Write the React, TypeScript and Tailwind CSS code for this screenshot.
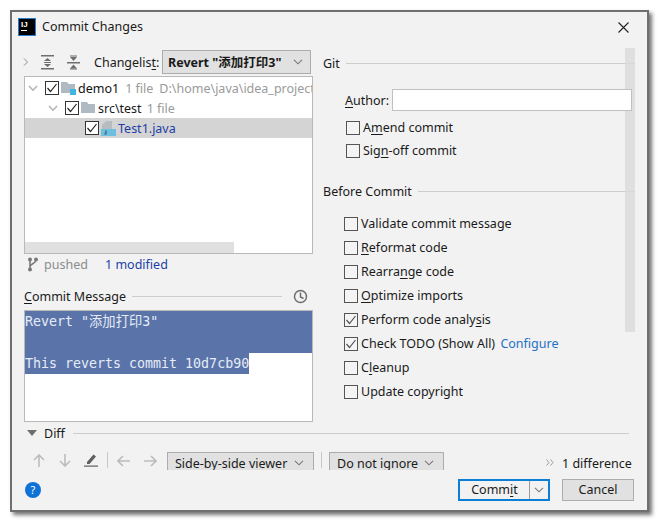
const Check = ({ checked = false, dark = false }: { checked?: boolean; dark?: boolean }) => (
  <span
    className={`flex h-[14px] w-[14px] shrink-0 items-center justify-center border ${
      dark ? "border-[#333333] bg-white" : "border-[#555555] bg-[#f4f4f4]"
    }`}
  >
    {checked && (
      <svg width="12" height="12" viewBox="0 0 12 12" fill="none" stroke={dark ? "#222222" : "#555555"} strokeWidth="1.2">
        <path d="M1.5 6 L4.5 9.5 L10.5 2" />
      </svg>
    )}
  </span>
);

const Chevron = ({ color = "#777777" }: { color?: string }) => (
  <svg width="10" height="6" viewBox="0 0 10 6" fill="none" stroke={color} strokeWidth="1.1">
    <path d="M1 0.8 L5 4.8 L9 0.8" />
  </svg>
);

const TreeChevron = () => (
  <svg width="10" height="7" viewBox="0 0 10 7" fill="none" stroke="#b4b4b4" strokeWidth="1.6" className="shrink-0">
    <path d="M1 1 L5 5.2 L9 1" />
  </svg>
);

const Folder = ({ badge = false }: { badge?: boolean }) => (
  <svg width="16" height="16" viewBox="0 0 16 16" className="shrink-0">
    <path d="M0 2 H6 L7.5 4 H14 V13 H0 Z" fill="#afbac3" />
    {badge && <rect x="9" y="9" width="6" height="6" fill="#40b6e0" />}
  </svg>
);

const Line = () => <div className="h-px flex-1 bg-[#cdcdcd]" />;

const OptionRow = ({ checked = false, rowClass = "h-[24px]", children }: { checked?: boolean; rowClass?: string; children: React.ReactNode }) => (
  <div className={`flex items-center gap-[3px] ${rowClass}`}>
    <Check checked={checked} />
    <span>{children}</span>
  </div>
);

const Combo = ({ label, width }: { label: string; width: string }) => (
  <div className={`flex h-[18px] items-start overflow-hidden border-x border-t border-[#adadad] bg-[#e1e1e1] pl-[7px] ${width}`}>
    <span className="whitespace-nowrap leading-[22px]">{label}</span>
    <span className="ml-auto mr-[9px] mt-[7px] shrink-0">
      <Chevron />
    </span>
  </div>
);

const App = () => {
  return (
    <div className="h-[523px] w-[660px] bg-white pl-[10px] pt-[10px] font-['Noto_Sans','Noto_Sans_CJK_SC',sans-serif] text-[12.5px] leading-[18px] text-[#1a1a1a]">
      <div className="flex h-[502px] w-[639px] flex-col border-2 border-[#6f6f6f] bg-[#f2f2f2] shadow-[3px_3px_4px_rgba(0,0,0,0.55)]">
        {/* Title bar */}
        <div className="flex h-[30px] shrink-0 items-center pl-[7px] pr-[18px]">
          <div className="flex h-[16px] w-[16px] flex-col bg-black px-[2px] pt-[1px] outline-1 outline-[#1f7fd4]">
            <span className="font-['Liberation_Sans'] text-[8px] font-bold leading-[9px] text-white">IJ</span>
            <span className="mt-px h-px w-[6px] bg-white" />
          </div>
          <span className="ml-[7px]">Commit Changes</span>
          <svg className="ml-auto" width="11" height="11" viewBox="0 0 11 11" stroke="#222222" strokeWidth="1.1">
            <path d="M0.5 0.5 L10.5 10.5 M10.5 0.5 L0.5 10.5" />
          </svg>
        </div>

        <div className="flex h-[380px] shrink-0">
          {/* Left column */}
          <div className="ml-[12px] flex w-[289px] shrink-0 flex-col pt-[8px]">
            <div className="flex h-[24px] items-center">
              <svg width="6" height="8" viewBox="0 0 6 8" fill="none" stroke="#8c8c8c" className="-ml-px">
                <path d="M1 0.5 L4.5 4 L1 7.5" />
              </svg>
              <svg width="14" height="15" viewBox="0 0 14 15" className="ml-[12px]" fill="#6e6e6e">
                <rect x="0" y="0" width="13" height="1.5" />
                <rect x="0" y="13" width="13" height="1.5" />
                <path d="M6.5 3 L10 6 H3 Z M6.5 12 L3 9 H10 Z" />
                <rect x="3" y="7" width="7" height="1" />
              </svg>
              <svg width="14" height="15" viewBox="0 0 14 15" className="ml-[12px]" fill="#6e6e6e">
                <rect x="0" y="7" width="13" height="1.5" />
                <path d="M6.5 6 L3 2 H10 Z M6.5 9.5 L10 13.5 H3 Z" />
                <rect x="3" y="0.5" width="7" height="1" />
                <rect x="3" y="13.5" width="7" height="1" />
              </svg>
              <span className="ml-[13px] w-[68px] shrink-0 pt-[2px]">
                Changelis<u className="underline-offset-2">t</u>:
              </span>
              <div className="flex h-[24px] w-[149px] shrink-0 items-center border border-[#adadad] bg-[#e1e1e1] pl-[5px] pr-[7px]">
                <span className="pt-[2px] font-bold">Revert "添加打印3"</span>
                <span className="ml-auto">
                  <Chevron />
                </span>
              </div>
            </div>

            {/* Changes tree */}
            <div className="mt-[2px] flex h-[178px] flex-col overflow-hidden border border-[#b9b9b9] bg-white pt-px">
              <div className="flex h-[20px] shrink-0 items-center whitespace-nowrap pl-[3px]">
                <TreeChevron />
                <span className="ml-[7px] shrink-0">
                  <Check checked dark />
                </span>
                <span className="ml-[2px] shrink-0">
                  <Folder badge />
                </span>
                <span className="ml-px shrink-0 pt-[2px] text-[#111111]">demo1</span>
                <span className="ml-[6px] shrink-0 pt-[2px] text-[#9a9a9a]">1 file</span>
                <span className="ml-[6px] shrink-0 pt-[2px] text-[#9a9a9a]">D:\home\java\idea_project</span>
              </div>
              <div className="flex h-[20px] shrink-0 items-center whitespace-nowrap pl-[23px]">
                <TreeChevron />
                <span className="ml-[7px] shrink-0">
                  <Check checked dark />
                </span>
                <span className="ml-[2px] shrink-0">
                  <Folder />
                </span>
                <span className="ml-px pt-[2px]">src\test</span>
                <span className="ml-[5px] pt-[2px] text-[#9a9a9a]">1 file</span>
              </div>
              <div className="flex h-[20px] shrink-0 items-center whitespace-nowrap bg-[#d4d4d4] pl-[60px]">
                <Check checked dark />
                <svg width="16" height="16" viewBox="0 0 16 16" className="ml-[2px] shrink-0">
                  <path d="M5 1 H11 V9 H1 V5 Z" fill="#b7bcc0" />
                  <rect x="0" y="9" width="15" height="7" fill="#6fbfe0" />
                  <path d="M5 10.5 V14 H3.5" stroke="#2a4a60" fill="none" />
                </svg>
                <span className="ml-px pt-[2px] text-[#1d3fa8]">Test1.java</span>
              </div>
              <div className="flex-1" />
              <div className="h-[11px] w-[209px] shrink-0 bg-[#e0e0e0]" />
            </div>

            <div className="flex h-[20px] items-center pl-[3px]">
              <svg width="12" height="15" viewBox="0 0 12 15" fill="none" stroke="#7a7a7a" strokeWidth="1.6">
                <circle cx="3" cy="2.5" r="1.2" fill="#7a7a7a" />
                <circle cx="9" cy="2.5" r="1.2" fill="#7a7a7a" />
                <circle cx="3" cy="12.5" r="1.2" fill="#7a7a7a" />
                <path d="M3 3 V12 M9 3 C9 7 3.5 6 3 10" />
              </svg>
              <span className="ml-[5px] w-[61px] pt-[2px] text-[#8c8c8c]">pushed</span>
              <span className="pt-[2px] text-[#1d3fa8]">1 modified</span>
            </div>

            <div className="mt-[9px] flex h-[27px] items-center gap-[6px]">
              <span>
                <u className="underline-offset-2">C</u>ommit Message
              </span>
              <Line />
              <svg width="15" height="15" viewBox="0 0 15 15" fill="none" stroke="#6e6e6e" strokeWidth="1.5" className="mx-[5px]">
                <circle cx="7.5" cy="7.5" r="6" />
                <path d="M7.5 3.5 V8 L10.5 9.5" />
              </svg>
            </div>

            <div className="h-[112px] border border-[#b9b9b9] bg-white font-['DejaVu_Sans_Mono','Noto_Sans_CJK_SC',monospace] text-[13.3px] leading-[21px] text-[#e6ecf7]">
              <div className="h-[21px] whitespace-pre bg-[#5a74aa]">Revert "添加打印3"</div>
              <div className="h-[21px] bg-[#5a74aa]" />
              <div className="h-[21px] w-[224px] whitespace-pre bg-[#5a74aa]">This reverts commit 10d7cb90</div>
            </div>
          </div>

          {/* Right column */}
          <div className="relative ml-[10px] w-[312px] shrink-0 pt-[12px]">
            <div className="absolute right-0 top-[6px] h-[284px] w-[10px] bg-[#dadada]/80" />
            <div className="flex h-[18px] items-center gap-[6px]">
              <span className="pt-[2px]">Git</span>
              <Line />
            </div>
            <div className="ml-[22px] mt-[17px] flex h-[22px] items-center">
              <span className="w-[47px] shrink-0 pt-[2px]">
                <u className="underline-offset-2">A</u>uthor:
              </span>
              <div className="relative h-[22px] w-[240px] border border-[#c0c0c0] bg-white" />
            </div>
            <div className="ml-[23px] mt-[5px]">
              <OptionRow rowClass="h-[23px]">
                A<u className="underline-offset-2">m</u>end commit
              </OptionRow>
              <OptionRow rowClass="h-[23px]">
                Sig<u className="underline-offset-2">n</u>-off commit
              </OptionRow>
            </div>
            <div className="mt-[20px] flex h-[18px] items-center gap-[6px]">
              <span className="pt-[2px]">Before Commit</span>
              <Line />
            </div>
            <div className="ml-[21px] mt-[12px]">
              <OptionRow>Validate commit message</OptionRow>
              <OptionRow>
                <u className="underline-offset-2">R</u>eformat code
              </OptionRow>
              <OptionRow>
                Rearra<u className="underline-offset-2">n</u>ge code
              </OptionRow>
              <OptionRow>
                <u className="underline-offset-2">O</u>ptimize imports
              </OptionRow>
              <OptionRow checked>
                Perform code analy<u className="underline-offset-2">s</u>is
              </OptionRow>
              <OptionRow checked>
                Check TODO (Show All) <span className="ml-[2px] text-[#2670c4]">Configure</span>
              </OptionRow>
              <OptionRow>
                C<u className="underline-offset-2">l</u>eanup
              </OptionRow>
              <OptionRow>Update copyright</OptionRow>
            </div>
          </div>
        </div>

        {/* Diff section */}
        <div className="mx-[12px] flex h-[22px] shrink-0 items-center">
          <svg width="10" height="6" viewBox="0 0 10 6" fill="#6e6e6e" className="ml-[3px]">
            <path d="M0 0 H10 L5 6 Z" />
          </svg>
          <span className="ml-[7px] mr-[8px] pt-[2px]">Diff</span>
          <div className="mr-[6px] h-px flex-1 bg-[#cdcdcd]" />
        </div>
        <div className="ml-[12px] mt-[8px] flex h-[18px] shrink-0 items-start">
          <svg width="12" height="13" viewBox="0 0 12 13" fill="none" stroke="#bcbcbc" strokeWidth="1.6" className="ml-[9px] mt-[2px]">
            <path d="M6 13 V1 M1 6 L6 1 L11 6" />
          </svg>
          <svg width="12" height="13" viewBox="0 0 12 13" fill="none" stroke="#bcbcbc" strokeWidth="1.6" className="ml-[14px] mt-[2px]">
            <path d="M6 0 V12 M1 7 L6 12 L11 7" />
          </svg>
          <svg width="14" height="14" viewBox="0 0 14 14" className="ml-[13px] mt-px">
            <path d="M3 9 L9.5 1.5 L12 3.5 L5.5 11 H3 Z" fill="#5e5e5e" />
            <rect x="0" y="12.5" width="14" height="1.2" fill="#5e5e5e" />
          </svg>
          <div className="ml-[9px] h-[16px] w-px bg-[#c8c8c8]" />
          <svg width="13" height="12" viewBox="0 0 13 12" fill="none" stroke="#bcbcbc" strokeWidth="1.6" className="ml-[9px] mt-[3px]">
            <path d="M13 6 H1 M6 1 L1 6 L6 11" />
          </svg>
          <svg width="13" height="12" viewBox="0 0 13 12" fill="none" stroke="#bcbcbc" strokeWidth="1.6" className="ml-[14px] mt-[3px]">
            <path d="M0 6 H12 M7 1 L12 6 L7 11" />
          </svg>
          <div className="ml-[10px]">
            <Combo label="Side-by-side viewer" width="w-[147px]" />
          </div>
          <div className="ml-[7px] h-[16px] w-px bg-[#c8c8c8]" />
          <div className="ml-[7px]">
            <Combo label="Do not ignore" width="w-[115px]" />
          </div>
          <svg width="8" height="7" viewBox="0 0 8 7" fill="none" stroke="#9a9a9a" className="ml-[102px] mt-[7px] shrink-0">
            <path d="M0.5 0.5 L3 3.5 L0.5 6.5 M4.5 0.5 L7 3.5 L4.5 6.5" />
          </svg>
          <span className="ml-[8px] mt-[3px]">1 difference</span>
        </div>

        {/* Bottom buttons */}
        <div className="ml-[13px] mt-[9px] flex h-[22px] shrink-0 items-center">
          <div className="flex h-[16px] w-[16px] items-center justify-center rounded-full bg-[#0f72d6] text-[11px] text-white">?</div>
          <div className="ml-[417px] flex h-[22px] w-[92px] items-center border-2 border-[#0b7fd6] bg-[#f2f2f2]">
            <span className="flex-1 text-center">
              Comm<u className="underline-offset-2">i</u>t
            </span>
            <div className="flex h-full w-[19px] items-center justify-center border-l border-[#9a9a9a]">
              <Chevron />
            </div>
          </div>
          <div className="ml-[12px] flex h-[22px] w-[72px] items-center justify-center border border-[#adadad] bg-[#e1e1e1]">Cancel</div>
        </div>
      </div>
    </div>
  );
};

export default App;
